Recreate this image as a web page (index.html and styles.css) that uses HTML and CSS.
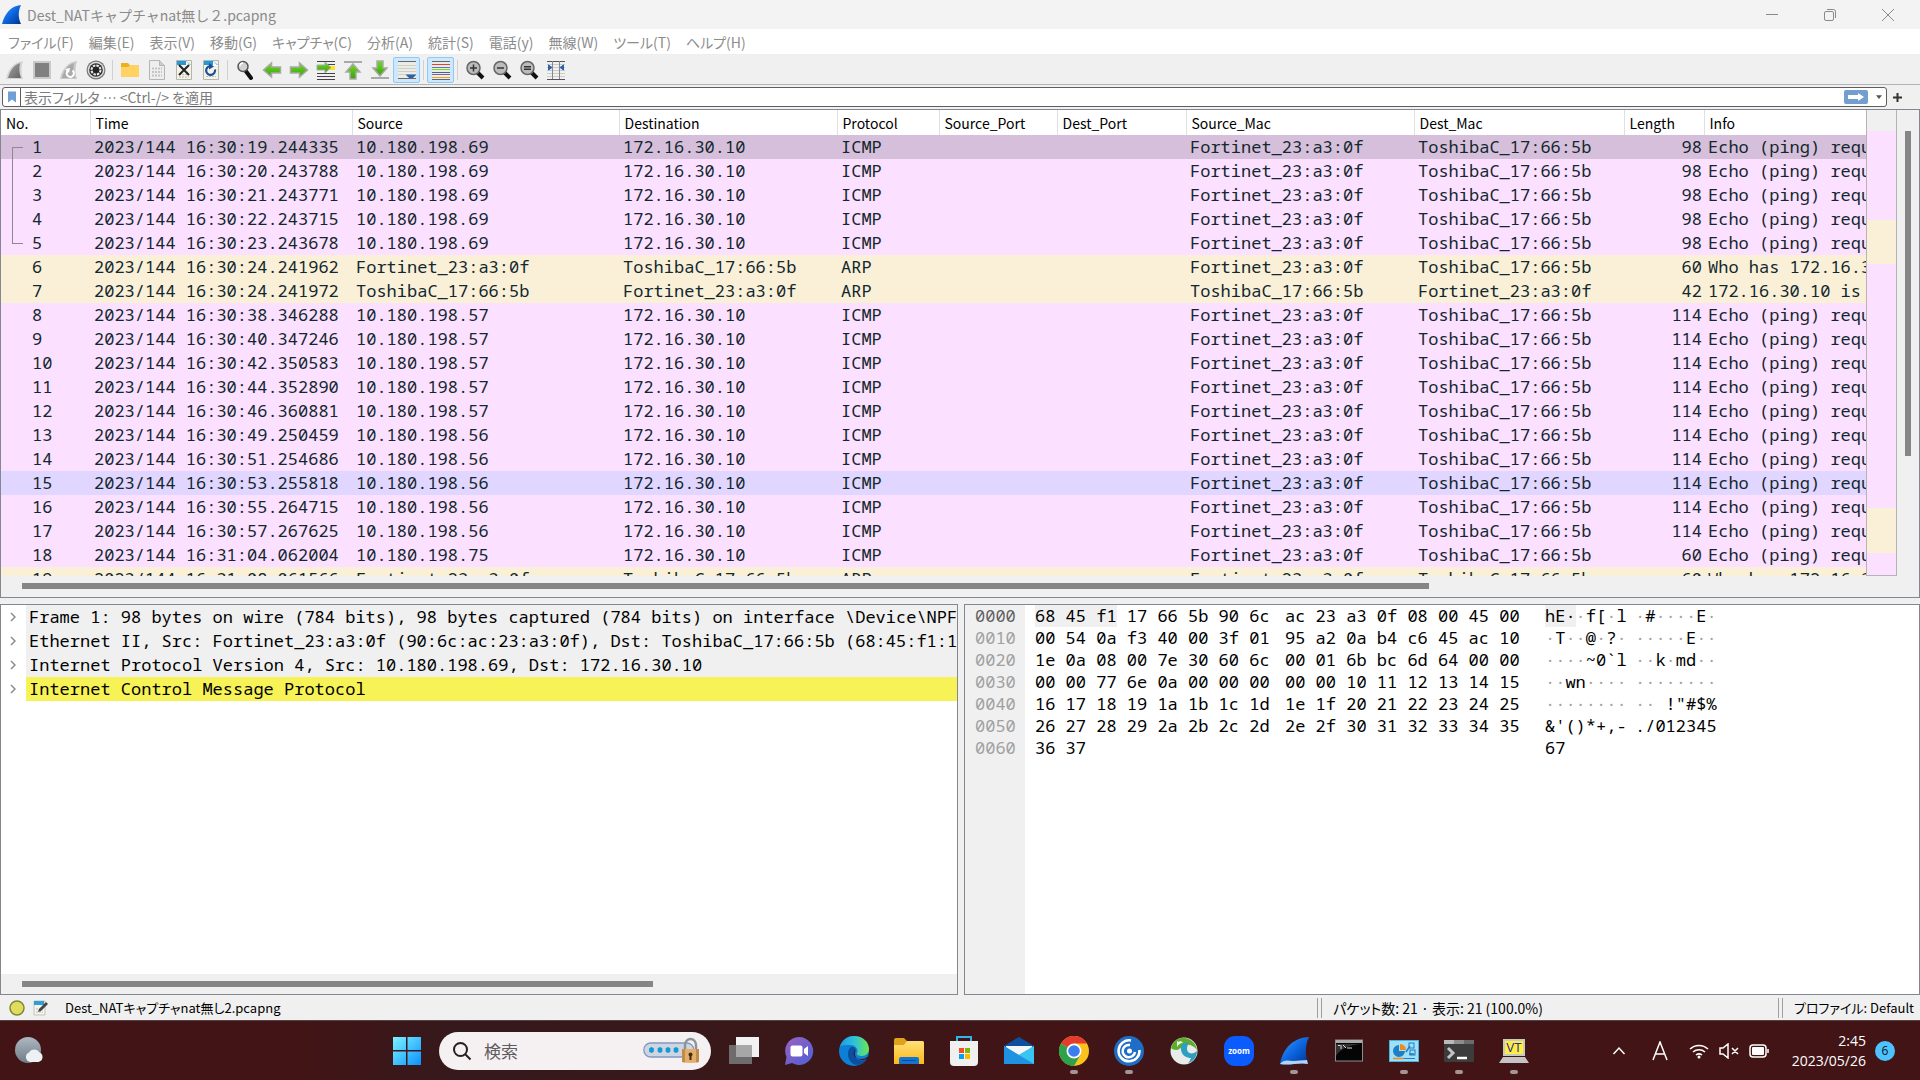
FILE: index.html
```html
<!DOCTYPE html>
<html lang="ja">
<head>
<meta charset="utf-8">
<title>Dest_NATキャプチャnat無し２.pcapng</title>
<link rel="stylesheet" href="styles.css">
</head>
<body>
<svg class="defs" aria-hidden="true">
  <defs>
    <linearGradient id="finBlue" x1="0" y1="0" x2="1" y2="1"><stop offset="0" stop-color="#3f9bff"/><stop offset=".5" stop-color="#0b66e0"/><stop offset="1" stop-color="#03318c"/></linearGradient>
    <linearGradient id="finGray" x1="0" y1="0" x2="1" y2="1"><stop offset="0" stop-color="#a5a5a5"/><stop offset="1" stop-color="#646464"/></linearGradient>
    <linearGradient id="green" x1="0" y1="0" x2="0" y2="1"><stop offset="0" stop-color="#6fdb25"/><stop offset="1" stop-color="#3c9f0a"/></linearGradient>
    <linearGradient id="folder" x1="0" y1="0" x2="0" y2="1"><stop offset="0" stop-color="#ffe07a"/><stop offset="1" stop-color="#fbb915"/></linearGradient>
    <linearGradient id="win" x1="0" y1="0" x2="1" y2="1"><stop offset="0" stop-color="#7df3ff"/><stop offset="1" stop-color="#0a92ff"/></linearGradient>
    <linearGradient id="edgeTop" x1="0" y1="0" x2="1" y2="0"><stop offset="0" stop-color="#1b9de2"/><stop offset=".5" stop-color="#2fc2d8"/><stop offset="1" stop-color="#6be64f"/></linearGradient>
    <linearGradient id="chat" x1="0" y1="0" x2="1" y2="1"><stop offset="0" stop-color="#9b62c0"/><stop offset="1" stop-color="#4a5fd8"/></linearGradient>
    <linearGradient id="weather" x1="0" y1="0" x2="0" y2="1"><stop offset="0" stop-color="#adb8c1"/><stop offset="1" stop-color="#707c86"/></linearGradient>
  </defs>
</svg>

<header class="titlebar">
  <svg class="app-icon" viewBox="0 0 20 20"><path d="M0 19C3 8 9 1 19 0c-3 6-3 13 0 19z" fill="url(#finBlue)"/></svg>
  <h1>Dest_NATキャプチャnat無し２.pcapng</h1>
  <div class="window-buttons">
    <button type="button" aria-label="最小化"><svg viewBox="0 0 14 14"><path d="M1 6.500h12"/></svg></button>
    <button type="button" aria-label="元に戻す"><svg viewBox="0 0 14 14"><rect x="1.500" y="3.500" width="9" height="9" rx="1.500"/><path d="M4 1.500h6.500a2 2 0 0 1 2 2V10"/></svg></button>
    <button type="button" aria-label="閉じる"><svg viewBox="0 0 14 14"><path d="M1 1l12 12M13 1L1 13"/></svg></button>
  </div>
</header>

<nav class="menubar">
  <button type="button">ファイル(F)</button>
  <button type="button">編集(E)</button>
  <button type="button">表示(V)</button>
  <button type="button">移動(G)</button>
  <button type="button">キャプチャ(C)</button>
  <button type="button">分析(A)</button>
  <button type="button">統計(S)</button>
  <button type="button">電話(y)</button>
  <button type="button">無線(W)</button>
  <button type="button">ツール(T)</button>
  <button type="button">ヘルプ(H)</button>
</nav>

<div class="toolbar" role="toolbar">
  <button type="button" aria-label="キャプチャ開始"><svg viewBox="0 0 20 20"><path d="M1 19C3 9 9 2 18 1c-2 6-2 12 0 18z" fill="#d4d4d4"/><path d="M3 18C5 10 9 5 15 3c-1 5-1 10 1 15z" fill="url(#finGray)"/></svg></button>
  <button type="button" aria-label="停止"><svg viewBox="0 0 20 20"><path d="M1 1h18v18H1z" fill="#c9c9c9"/><path d="M3 3h14v14H3z" fill="#808080"/></svg></button>
  <button type="button" aria-label="再開"><svg viewBox="0 0 20 20"><path d="M1 19C3 9 9 2 18 1c-2 6-2 12 0 18z" fill="#c9c9c9"/><path d="M3 18C5 10 9 5 15 3c-1 5-1 10 1 15z" fill="#a9a9a9"/><path d="M13.500 10.500a3.600 3.600 0 1 1-5 .5" fill="none" stroke="#fff" stroke-width="2"/><path d="M6 9l5-1-1 5z" fill="#fff"/></svg></button>
  <button type="button" aria-label="オプション"><svg viewBox="0 0 20 20"><circle cx="10" cy="10" r="9.500" fill="#777"/><circle cx="10" cy="10" r="8.300" fill="#ddd"/><circle cx="10" cy="10" r="6.800" fill="#2a2a2a"/><circle cx="10" cy="10" r="4.500" fill="none" stroke="#eee" stroke-width="2" stroke-dasharray="2.500 1"/><circle cx="10" cy="10" r="2.500" fill="#222"/></svg></button>
  <span class="sep"></span>
  <button type="button" aria-label="開く"><svg viewBox="0 0 20 20"><path d="M1 3h7l2 2.500h9V17H1z" fill="#efb01f"/><path d="M1 7h7l2-1.500h9V17H1z" fill="#ffd261"/></svg></button>
  <button type="button" aria-label="保存"><svg viewBox="0 0 20 20"><path d="M2.500.5h10l5 5v14h-15z" fill="#eee" stroke="#b4b4b4"/><path d="M12.500.5v5h5" fill="#ccc" stroke="#b4b4b4"/><path d="M5 8.500h10M5 12h10M5 15.500h10" stroke="#c3c3c3" stroke-width="2" stroke-dasharray="2 1"/></svg></button>
  <button type="button" aria-label="閉じる"><svg viewBox="0 0 20 20"><path d="M2.500.5h15v19h-15z" fill="#f3f3e8" stroke="#b5b5aa"/><path d="M3 1h9l5 4H3z" fill="#2499d8"/><path d="M12 1l5 5h-5z" fill="#fff"/><path d="M5 14.500h10M5 17h10" stroke="#bbb" stroke-dasharray="2 1"/><path d="M5 5l10 10M15 5L5 15" stroke="#222" stroke-width="2"/></svg></button>
  <button type="button" aria-label="再読み込み"><svg viewBox="0 0 20 20"><path d="M2.500.5h15v19h-15z" fill="#f3f3e8" stroke="#b5b5aa"/><path d="M3 1h9l5 4H3z" fill="#2499d8"/><path d="M12 1l5 5h-5z" fill="#fff"/><path d="M5 16.500h10" stroke="#bbb" stroke-dasharray="2 1"/><path d="M14 9.500A4.500 4.500 0 1 1 9 6" fill="none" stroke="#1b4f95" stroke-width="2.200"/><path d="M8 3l5 3.500-5 3z" fill="#1b4f95"/></svg></button>
  <span class="sep"></span>
  <button type="button" aria-label="検索"><svg viewBox="0 0 20 20"><path d="M10 10l6 8" stroke="#111" stroke-width="4" stroke-linecap="round"/><circle cx="8" cy="6.500" r="5" fill="#d0d3d5" stroke="#555" stroke-width="1.500"/><path d="M5 6c0-2 1-3 3-3" stroke="#fff" fill="none" stroke-width="1.500"/></svg></button>
  <button type="button" aria-label="戻る"><svg viewBox="0 0 20 20"><path d="M1.500 10l8-7v4h9v6h-9v4z" fill="url(#green)" stroke="#a9a9a9" stroke-width="1.500"/></svg></button>
  <button type="button" aria-label="進む"><svg viewBox="0 0 20 20"><path d="M18.500 10l-8-7v4h-9v6h9v4z" fill="url(#green)" stroke="#a9a9a9" stroke-width="1.500"/></svg></button>
  <button type="button" aria-label="指定パケットへ"><svg viewBox="0 0 20 20"><path d="M1 1.500h18M10 4.500h9M1 13.500h18M1 16.500h18M1 19.500h18" stroke="#444"/><path d="M13 6h6v4h-6z" fill="#fbe22b"/><path d="M15 7.500L9 2v3H1v5h8v3z" fill="url(#green)" stroke="#a9a9a9"/></svg></button>
  <button type="button" aria-label="最初へ"><svg viewBox="0 0 20 20"><path d="M1 1h18v2H1z" fill="#a9a9a9"/><path d="M10 4l7 8h-4v7H7v-7H3z" fill="url(#green)" stroke="#a9a9a9" stroke-width="1.500"/></svg></button>
  <button type="button" aria-label="最後へ"><svg viewBox="0 0 20 20"><path d="M1 17h18v2H1z" fill="#a9a9a9"/><path d="M10 16l7-8h-4V1H7v7H3z" fill="url(#green)" stroke="#a9a9a9" stroke-width="1.500"/></svg></button>
  <button type="button" class="pressed" aria-label="自動スクロール"><svg viewBox="0 0 20 20"><path d="M1 2h18v16H1z" fill="#ecece6"/><path d="M1 1.500h18M1 18.500h18" stroke="#666"/><path d="M1 5.500h18M1 8.500h18M1 11.500h18M1 14.500h18" stroke="#cfcfc8"/><path d="M9 14.500h10c0 1.500-2 2-3 3.500h-4c-1-1.500-3-2-3-3.500z" fill="#2c62ab"/></svg></button>
  <span class="sep"></span>
  <button type="button" class="pressed" aria-label="色分け"><svg viewBox="0 0 20 20"><path d="M1 1h18v18H1z" fill="#ecece6"/><path d="M1 1.500h18M1 19.500h18" stroke="#666"/><path d="M1 4.500h18" stroke="#ef3b34"/><path d="M1 7.500h18" stroke="#4a7cc0"/><path d="M1 9.500h18" stroke="#6fd625"/><path d="M1 12.500h18" stroke="#3966a8"/><path d="M1 14.500h18" stroke="#8a5f90"/><path d="M1 17.500h18" stroke="#d6a72b"/></svg></button>
  <span class="sep"></span>
  <button type="button" aria-label="拡大"><svg viewBox="0 0 20 20"><path d="M12 12l6 6" stroke="#111" stroke-width="4"/><circle cx="8.500" cy="8" r="6.500" fill="#bcbcbc" stroke="#666" stroke-width="1.500"/><path d="M5 8h7M8.500 4.500v7" stroke="#333" stroke-width="1.500"/></svg></button>
  <button type="button" aria-label="縮小"><svg viewBox="0 0 20 20"><path d="M12 12l6 6" stroke="#111" stroke-width="4"/><circle cx="8.500" cy="8" r="6.500" fill="#bcbcbc" stroke="#666" stroke-width="1.500"/><path d="M5 8h7" stroke="#333" stroke-width="1.500"/></svg></button>
  <button type="button" aria-label="標準サイズ"><svg viewBox="0 0 20 20"><path d="M12 12l6 6" stroke="#111" stroke-width="4"/><circle cx="8.500" cy="8" r="6.500" fill="#bcbcbc" stroke="#666" stroke-width="1.500"/><path d="M5 6.800h7M5 9.300h7" stroke="#333" stroke-width="1.500"/></svg></button>
  <button type="button" aria-label="列幅の調整"><svg viewBox="0 0 20 20"><path d="M1 1.500h18M1 19.500h18" stroke="#555"/><path d="M1 4.500h18M1 7.500h18M1 10.500h18M1 13.500h18M1 16.500h18" stroke="#ccc"/><path d="M6.500 1v18M13.500 1v18" stroke="#888"/><path d="M2.500 5l3.500 2.500L2.500 10zM17.500 5L14 7.500l3.500 2.500z" fill="#2c62ab" stroke="#2c62ab"/></svg></button>
</div>

<form class="filterbar">
  <div class="filter-box">
    <button type="button" class="bookmark" aria-label="ブックマーク"><svg viewBox="0 0 10 14"><path d="M0 0h10v14l-5-4-5 4z" fill="#6f9fd4"/></svg></button>
    <input type="text" aria-label="表示フィルタ" placeholder="表示フィルタ … &lt;Ctrl-/&gt; を適用">
    <button type="button" class="apply" aria-label="適用"><svg viewBox="0 0 24 14"><rect width="24" height="14" rx="2" fill="#729fcf"/><path d="M4 5h10V3l6 4-6 4V9H4z" fill="#fff"/></svg></button>
    <button type="button" class="history" aria-label="履歴"><svg viewBox="0 0 8 5"><path d="M0 0h8L4 5z" fill="#555"/></svg></button>
  </div>
  <button type="button" class="add" aria-label="追加"><svg viewBox="0 0 9 9"><path d="M4.500 0v9M0 4.500h9" stroke="#333" stroke-width="2"/></svg></button>
</form>

<main class="panes">
  <section class="packet-list">
    <div class="packet-scroll">
      <table>
        <colgroup><col class="c-no"><col class="c-time"><col class="c-source"><col class="c-dest"><col class="c-proto"><col class="c-sport"><col class="c-dport"><col class="c-smac"><col class="c-dmac"><col class="c-len"><col></colgroup>
        <thead><tr><th>No.</th><th>Time</th><th>Source</th><th>Destination</th><th>Protocol</th><th>Source_Port</th><th>Dest_Port</th><th>Source_Mac</th><th>Dest_Mac</th><th>Length</th><th>Info</th></tr></thead>
        <tbody>
        <tr class="selected conv first"><td>1</td><td>2023/144 16:30:19.244335</td><td>10.180.198.69</td><td>172.16.30.10</td><td>ICMP</td><td></td><td></td><td>Fortinet_23:a3:0f</td><td>ToshibaC_17:66:5b</td><td>98</td><td>Echo (ping) requ</td></tr>
        <tr class="conv"><td>2</td><td>2023/144 16:30:20.243788</td><td>10.180.198.69</td><td>172.16.30.10</td><td>ICMP</td><td></td><td></td><td>Fortinet_23:a3:0f</td><td>ToshibaC_17:66:5b</td><td>98</td><td>Echo (ping) requ</td></tr>
        <tr class="conv"><td>3</td><td>2023/144 16:30:21.243771</td><td>10.180.198.69</td><td>172.16.30.10</td><td>ICMP</td><td></td><td></td><td>Fortinet_23:a3:0f</td><td>ToshibaC_17:66:5b</td><td>98</td><td>Echo (ping) requ</td></tr>
        <tr class="conv"><td>4</td><td>2023/144 16:30:22.243715</td><td>10.180.198.69</td><td>172.16.30.10</td><td>ICMP</td><td></td><td></td><td>Fortinet_23:a3:0f</td><td>ToshibaC_17:66:5b</td><td>98</td><td>Echo (ping) requ</td></tr>
        <tr class="conv last"><td>5</td><td>2023/144 16:30:23.243678</td><td>10.180.198.69</td><td>172.16.30.10</td><td>ICMP</td><td></td><td></td><td>Fortinet_23:a3:0f</td><td>ToshibaC_17:66:5b</td><td>98</td><td>Echo (ping) requ</td></tr>
        <tr class="arp"><td>6</td><td>2023/144 16:30:24.241962</td><td>Fortinet_23:a3:0f</td><td>ToshibaC_17:66:5b</td><td>ARP</td><td></td><td></td><td>Fortinet_23:a3:0f</td><td>ToshibaC_17:66:5b</td><td>60</td><td>Who has 172.16.3</td></tr>
        <tr class="arp"><td>7</td><td>2023/144 16:30:24.241972</td><td>ToshibaC_17:66:5b</td><td>Fortinet_23:a3:0f</td><td>ARP</td><td></td><td></td><td>ToshibaC_17:66:5b</td><td>Fortinet_23:a3:0f</td><td>42</td><td>172.16.30.10 is</td></tr>
        <tr><td>8</td><td>2023/144 16:30:38.346288</td><td>10.180.198.57</td><td>172.16.30.10</td><td>ICMP</td><td></td><td></td><td>Fortinet_23:a3:0f</td><td>ToshibaC_17:66:5b</td><td>114</td><td>Echo (ping) requ</td></tr>
        <tr><td>9</td><td>2023/144 16:30:40.347246</td><td>10.180.198.57</td><td>172.16.30.10</td><td>ICMP</td><td></td><td></td><td>Fortinet_23:a3:0f</td><td>ToshibaC_17:66:5b</td><td>114</td><td>Echo (ping) requ</td></tr>
        <tr><td>10</td><td>2023/144 16:30:42.350583</td><td>10.180.198.57</td><td>172.16.30.10</td><td>ICMP</td><td></td><td></td><td>Fortinet_23:a3:0f</td><td>ToshibaC_17:66:5b</td><td>114</td><td>Echo (ping) requ</td></tr>
        <tr><td>11</td><td>2023/144 16:30:44.352890</td><td>10.180.198.57</td><td>172.16.30.10</td><td>ICMP</td><td></td><td></td><td>Fortinet_23:a3:0f</td><td>ToshibaC_17:66:5b</td><td>114</td><td>Echo (ping) requ</td></tr>
        <tr><td>12</td><td>2023/144 16:30:46.360881</td><td>10.180.198.57</td><td>172.16.30.10</td><td>ICMP</td><td></td><td></td><td>Fortinet_23:a3:0f</td><td>ToshibaC_17:66:5b</td><td>114</td><td>Echo (ping) requ</td></tr>
        <tr><td>13</td><td>2023/144 16:30:49.250459</td><td>10.180.198.56</td><td>172.16.30.10</td><td>ICMP</td><td></td><td></td><td>Fortinet_23:a3:0f</td><td>ToshibaC_17:66:5b</td><td>114</td><td>Echo (ping) requ</td></tr>
        <tr><td>14</td><td>2023/144 16:30:51.254686</td><td>10.180.198.56</td><td>172.16.30.10</td><td>ICMP</td><td></td><td></td><td>Fortinet_23:a3:0f</td><td>ToshibaC_17:66:5b</td><td>114</td><td>Echo (ping) requ</td></tr>
        <tr class="hover"><td>15</td><td>2023/144 16:30:53.255818</td><td>10.180.198.56</td><td>172.16.30.10</td><td>ICMP</td><td></td><td></td><td>Fortinet_23:a3:0f</td><td>ToshibaC_17:66:5b</td><td>114</td><td>Echo (ping) requ</td></tr>
        <tr><td>16</td><td>2023/144 16:30:55.264715</td><td>10.180.198.56</td><td>172.16.30.10</td><td>ICMP</td><td></td><td></td><td>Fortinet_23:a3:0f</td><td>ToshibaC_17:66:5b</td><td>114</td><td>Echo (ping) requ</td></tr>
        <tr><td>17</td><td>2023/144 16:30:57.267625</td><td>10.180.198.56</td><td>172.16.30.10</td><td>ICMP</td><td></td><td></td><td>Fortinet_23:a3:0f</td><td>ToshibaC_17:66:5b</td><td>114</td><td>Echo (ping) requ</td></tr>
        <tr><td>18</td><td>2023/144 16:31:04.062004</td><td>10.180.198.75</td><td>172.16.30.10</td><td>ICMP</td><td></td><td></td><td>Fortinet_23:a3:0f</td><td>ToshibaC_17:66:5b</td><td>60</td><td>Echo (ping) requ</td></tr>
        <tr class="arp"><td>19</td><td>2023/144 16:31:08.061566</td><td>Fortinet_23:a3:0f</td><td>ToshibaC_17:66:5b</td><td>ARP</td><td></td><td></td><td>Fortinet_23:a3:0f</td><td>ToshibaC_17:66:5b</td><td>60</td><td>Who has 172.16.3</td></tr>
        </tbody>
      </table>
    </div>
    <div class="minimap"><i class="m4"></i><i class="m2 cream"></i><i class="m11"></i><i class="m2 cream"></i><i class="m1"></i></div>
    <div class="vscroll"><span class="thumb"></span></div>
    <div class="hscroll"><span class="thumb"></span></div>
  </section>

  <div class="lower">
    <section class="details">
      <ul class="tree">
        <li><svg viewBox="0 0 6 10"><path d="M1 1l4 4-4 4"/></svg><span>Frame 1: 98 bytes on wire (784 bits), 98 bytes captured (784 bits) on interface \Device\NPF_{</span></li>
        <li><svg viewBox="0 0 6 10"><path d="M1 1l4 4-4 4"/></svg><span>Ethernet II, Src: Fortinet_23:a3:0f (90:6c:ac:23:a3:0f), Dst: ToshibaC_17:66:5b (68:45:f1:17:</span></li>
        <li><svg viewBox="0 0 6 10"><path d="M1 1l4 4-4 4"/></svg><span>Internet Protocol Version 4, Src: 10.180.198.69, Dst: 172.16.30.10</span></li>
        <li class="warn"><svg viewBox="0 0 6 10"><path d="M1 1l4 4-4 4"/></svg><span>Internet Control Message Protocol</span></li>
      </ul>
      <div class="hscroll"><span class="thumb"></span></div>
    </section>
    <section class="bytes">
      <table class="hex">
        <tr class="current"><th>0000</th><td><mark>68 45 f1</mark> 17 66 5b 90 6c</td><td>ac 23 a3 0f 08 00 45 00</td><td><mark>hE·</mark><i>·</i>f[<i>·</i>l</td><td><i>·</i>#<i>····</i>E<i>·</i></td></tr>
        <tr><th>0010</th><td>00 54 0a f3 40 00 3f 01</td><td>95 a2 0a b4 c6 45 ac 10</td><td><i>·</i>T<i>··</i>@<i>·</i>?<i>·</i></td><td><i>·····</i>E<i>··</i></td></tr>
        <tr><th>0020</th><td>1e 0a 08 00 7e 30 60 6c</td><td>00 01 6b bc 6d 64 00 00</td><td><i>····</i>~0`l</td><td><i>··</i>k<i>·</i>md<i>··</i></td></tr>
        <tr><th>0030</th><td>00 00 77 6e 0a 00 00 00</td><td>00 00 10 11 12 13 14 15</td><td><i>··</i>wn<i>····</i></td><td><i>········</i></td></tr>
        <tr><th>0040</th><td>16 17 18 19 1a 1b 1c 1d</td><td>1e 1f 20 21 22 23 24 25</td><td><i>········</i></td><td><i>··</i> !"#$%</td></tr>
        <tr><th>0050</th><td>26 27 28 29 2a 2b 2c 2d</td><td>2e 2f 30 31 32 33 34 35</td><td>&amp;'()*+,-</td><td>./012345</td></tr>
        <tr><th>0060</th><td>36 37</td><td></td><td>67</td><td></td></tr>
      </table>
    </section>
  </div>
</main>

<div class="statusbar">
  <div class="status-file">
    <svg class="expert" viewBox="0 0 16 16"><circle cx="8" cy="8" r="7" fill="#dede5c" stroke="#85853a" stroke-width="1.500"/></svg>
    <svg class="comment" viewBox="0 0 16 16"><path d="M1 1h11v14H1z" fill="#f4f4ec" stroke="#c4c4bb"/><path d="M1 1h10v4H1z" fill="#2c9fda"/><path d="M3 9h7M3 12h7" stroke="#bbb" stroke-dasharray="2 1"/><path d="M13 2l2 2-7 7-3 1 1-3z" fill="#444"/></svg>
    <span>Dest_NATキャプチャnat無し2.pcapng</span>
  </div>
  <div class="status-count">パケット数: 21 · 表示: 21 (100.0%)</div>
  <div class="status-profile">プロファイル: Default</div>
</div>

<footer class="taskbar">
  <button type="button" class="weather" aria-label="天気"><svg viewBox="0 0 30 30"><circle cx="14" cy="14" r="13" fill="url(#weather)"/><path d="M16 26a5 5 0 0 1-1-9.500 6 6 0 0 1 10.500 0A5 5 0 0 1 24.500 26z" fill="#eef1f4"/></svg></button>
  <div class="apps">
    <button type="button" aria-label="スタート"><svg viewBox="0 0 30 30"><path d="M1 1h13v13H1zM15.500 1h13.500v13H15.500zM1 15.500h13V29H1zM15.500 15.500h13.500V29H15.500z" fill="url(#win)"/></svg></button>
    <div class="search">
      <svg class="lens" viewBox="0 0 20 20"><circle cx="8.500" cy="8.500" r="6.500"/><path d="M13 13l5.500 5.500"/></svg>
      <input type="text" aria-label="検索" placeholder="検索">
      <svg class="password" viewBox="0 0 58 28"><rect x=".8" y="6" width="50" height="14" rx="7" fill="#cfd6e2" stroke="#8398c0" stroke-width="1.300"/><path d="M6 13h5M8.500 10v6M6.500 11l4 4M10.500 11l-4 4M14.500 13h5M17 10v6M15 11l4 4M19 11l-4 4M22.500 13h5M25 10v6M23 11l4 4M27 11l-4 4M30.500 13h5M33 10v6M31 11l4 4M35 11l-4 4" stroke="#129ad2" stroke-width="1.500"/><path d="M42 14V8a5.500 6 0 0 1 11 0v6" fill="none" stroke="#8d9498" stroke-width="2.500"/><path d="M39 12h17v13q-8 2-17 0z" fill="#e0b06c"/><path d="M39 12h3v13.500l-3-.5zM53 12h3v13l-3 .5z" fill="#c28c48"/><circle cx="47.500" cy="17.500" r="2" fill="#432a12"/><path d="M46.500 18h2v5h-2z" fill="#432a12"/></svg>
    </div>
    <button type="button" aria-label="タスクビュー"><svg viewBox="0 0 30 30"><path d="M0 9h23v19H0z" fill="#6e6c6c"/><path d="M7 1h23v20H7z" fill="#f1f1f1"/><path d="M7 9h16v12H7z" fill="#a8a7a7"/></svg></button>
    <button type="button" aria-label="チャット"><svg viewBox="0 0 30 30"><path d="M15 1a14 14 0 1 1-7 26L1 29l1.500-8A14 14 0 0 1 15 1z" fill="url(#chat)"/><rect x="6.500" y="9.500" width="12" height="11" rx="2" fill="#fff"/><path d="M20 13l4-3v10l-4-3z" fill="#fff"/></svg></button>
    <button type="button" aria-label="Edge"><svg viewBox="0 0 30 30"><circle cx="15" cy="15" r="15" fill="#0d7fd6"/><path d="M1 11C3 4 8 0 15 0c9 0 15 6 15 13 0 4-3 7-7 7-3 0-6-1-5-3 2-3-1-8-7-8-5 0-8 0-10 2z" fill="url(#edgeTop)"/><path d="M11 12c-3 3-3 11 2 15 5 4 12 1 15-4-6 3-12 1-12-5 0-2 1-3 1-4-1-4-5-4-6-2z" fill="#0c4f9f"/><path d="M16 14c-3 3-1 9 6 9 3 0 5-1 6-2 1-1 2 1 2 2v3l-2 1c1-2 1-4 0-4-7 3-14-1-12-9z" fill="#431416"/></svg></button>
    <button type="button" aria-label="エクスプローラー"><svg viewBox="0 0 30 30"><path d="M0 4q0-2 2-2h8l3 3h15q2 0 2 2v6H0z" fill="#dea31a"/><path d="M0 9h10l3-4h15q2 0 2 2v21H0z" fill="url(#folder)"/><path d="M5 28v-5q0-2 2-2h16q2 0 2 2v5z" fill="#1474d1"/><path d="M8 24.500h14" stroke="#0a4e96"/></svg></button>
    <button type="button" aria-label="Store"><svg viewBox="0 0 30 30"><path d="M8 6V1h14v5" fill="none" stroke="#31b5ec" stroke-width="2"/><path d="M1 5h28v21q0 4-4 4H5q-4 0-4-4z" fill="#f0f0f0"/><path d="M10 12h5v5h-5z" fill="#f25022"/><path d="M16 12h5v5h-5z" fill="#7fba00"/><path d="M10 18h5v5h-5z" fill="#00a4ef"/><path d="M16 18h5v5h-5z" fill="#ffb900"/></svg></button>
    <button type="button" aria-label="メール"><svg viewBox="0 0 30 30"><path d="M0 10L15 1l15 9v6H0z" fill="#0c4f9f"/><path d="M2 10h26v10H2z" fill="#f5f5f5"/><path d="M0 10l15 9 15-9v18H0z" fill="#2cb0ee"/><path d="M0 28L30 10v18z" fill="#39c5f3"/><path d="M0 10l30 18H0z" fill="#1f93e2"/></svg></button>
    <button type="button" class="running" aria-label="Chrome"><svg viewBox="0 0 30 30"><circle cx="15" cy="15" r="15" fill="#fcc31e"/><path d="M15 15L2 7.500A15 15 0 0 1 28 7.500H15z" fill="#e33b2e"/><path d="M2 7.500A15 15 0 0 0 15 30l6.500-11.200L15 15z" fill="#2da14b"/><circle cx="15" cy="15" r="7.500" fill="#fff"/><circle cx="15" cy="15" r="5.800" fill="#3b7ded"/></svg></button>
    <button type="button" class="running" aria-label="Citrix"><svg viewBox="0 0 30 30"><circle cx="15" cy="15" r="15" fill="#1f6dc6"/><g fill="none" stroke="#fff" stroke-width="2.500"><path d="M17 4.500A10.500 10.500 0 1 0 25.500 14"/><path d="M16 9a6.200 6.200 0 1 0 5 7"/></g><circle cx="15.500" cy="15" r="2.500" fill="#fff"/></svg></button>
    <button type="button" aria-label="AnyConnect"><svg viewBox="0 0 30 30"><circle cx="15" cy="15" r="13.500" fill="#e8ebe8"/><path d="M2 12C4 5 10 1 16 2c7 1 11 6 12 12-3-4-7-6-11-5-4 0-5 4-9 5-3 0-5-1-6-2z" fill="#5cae2b"/><path d="M20 7c-5-2-9 2-8 7 1 6 6 8 10 8-1 2-1 3-3 5 5-1 9-6 9-12-3 3-7 3-9 1-2-3-1-6 1-9z" fill="#2e9fc0"/><path d="M8 5c1 1 2 1 4 0l2 2c-3 0-5 2-6 4z" fill="#f4f6f4"/></svg></button>
    <button type="button" aria-label="Zoom"><svg viewBox="0 0 30 30"><rect width="30" height="30" rx="11" fill="#0b5cff"/><text x="15" y="18" text-anchor="middle" class="zoom-word">zoom</text></svg></button>
    <button type="button" class="running" aria-label="Wireshark"><svg viewBox="0 0 30 30"><path d="M1 28C4 13 13 2 30 1c-4 8-4 18-1 27-9-2-18 2-28 0z" fill="url(#finBlue)"/><path d="M1 28c4-5 8-3 13-3s9-1 14-1l1 4c-9-2-18 2-28 0z" fill="#b4d2f3"/></svg></button>
    <button type="button" aria-label="コマンドプロンプト"><svg viewBox="0 0 30 30"><rect x="1.500" y="4" width="27" height="21" fill="#050505" stroke="#8d8d8d"/><path d="M2 4h26v3H2z" fill="#aaa"/><path d="M2 8h24Q8 10 2 20z" fill="#333"/><path d="M4 9.500h2M7 9v4M9 9l3 3M13 12h5" stroke="#ddd"/></svg></button>
    <button type="button" class="running" aria-label="コントロールパネル"><svg viewBox="0 0 30 30"><rect x=".5" y="4.500" width="29" height="21" fill="#9fdff7" stroke="#42b4e6"/><path d="M10 9a6 6 0 1 0 6 6h-6z" fill="#1e7fc4"/><path d="M11 8a6 6 0 0 1 6 6h-6z" fill="#f18a1b"/><path d="M17 16l4-6M20 18h5" stroke="#1e7fc4" stroke-width="1.500"/><rect x="20" y="7" width="5" height="5" fill="none" stroke="#1e7fc4"/><rect x="21" y="14" width="5" height="5" fill="none" stroke="#1e7fc4"/><path d="M4 22.500h11" stroke="#f18a1b" stroke-width="1.500"/><path d="M15 22.500h11" stroke="#1e7fc4"/></svg></button>
    <button type="button" class="running" aria-label="ターミナル"><svg viewBox="0 0 30 30"><rect y="4" width="30" height="22" rx="1" fill="#3c3c3c"/><path d="M0 4h10v4H0z" fill="#b9b9b9"/><path d="M10 4h10v4H10z" fill="#8d8d8d"/><path d="M20 4h10v4H20z" fill="#6b6b6b"/><path d="M4 12l5 5-5 5" fill="none" stroke="#c4c4c4" stroke-width="3"/><path d="M13 22h10" stroke="#fff" stroke-width="2.500"/></svg></button>
    <button type="button" class="running" aria-label="Tera Term"><svg viewBox="0 0 30 30"><path d="M4 3h22v17H4z" fill="#c9c9c0"/><path d="M6 5h18v13H6z" fill="#ffee3d"/><path d="M4 21h22l4 6H0z" fill="#c4c4c4"/><text x="15" y="16" text-anchor="middle" class="vt-word">VT</text></svg></button>
  </div>
  <div class="tray">
    <button type="button" class="tray-up" aria-label="隠れているインジケーター"><svg viewBox="0 0 14 10"><path d="M1.500 8L7 2l5.500 6"/></svg></button>
    <button type="button" class="ime" aria-label="入力モード A"><svg viewBox="0 0 18 20"><path d="M2 19L9 1l7 18M4.500 13h9"/></svg></button>
    <button type="button" class="net" aria-label="ネットワーク"><svg viewBox="0 0 20 16"><path d="M1 6a13 13 0 0 1 18 0M4 9a9 9 0 0 1 12 0M7 12a5 5 0 0 1 6 0"/><circle cx="10" cy="14" r="1.500" fill="#fff" stroke="none"/></svg><svg viewBox="0 0 20 16"><path d="M1 5h3l5-4v14l-5-4H1zM13 5l6 6M19 5l-6 6"/></svg><svg viewBox="0 0 20 16"><rect x="1" y="2" width="16" height="12" rx="3"/><rect x="3" y="4" width="12" height="8" rx="1" fill="#fff" stroke="none"/><path d="M19 6v4"/></svg></button>
    <button type="button" class="clock"><span>2:45</span><span>2023/05/26</span></button>
    <span class="badge">6</span>
  </div>
</footer>
</body>
</html>
```
FILE: styles.css
```css
:root {
  --ui: "Noto Sans CJK JP", sans-serif;
  --mono: "Noto Sans Mono", "Liberation Mono", monospace;
  --chrome: #f0f0f0;
  --edge: #828790;
  --thumb: #868686;
}

* { box-sizing: border-box; }

body {
  margin: 0;
  min-height: 100vh;
  display: flex;
  flex-direction: column;
  background: var(--chrome);
  color: #000;
  font: 14px/20px var(--ui);
  font-feature-settings: "palt";
  overflow: hidden;
}

button {
  display: flex;
  align-items: center;
  justify-content: center;
  padding: 0;
  border: 0;
  background: none;
  color: inherit;
  font: inherit;
}

input {
  min-width: 0;
  border: 0;
  padding: 0;
  outline: 0;
  background: none;
  font: inherit;
}

.defs { position: absolute; width: 0; height: 0; }

.titlebar {
  display: flex;
  align-items: center;
  height: 29px;
  padding: 0 3px 0 2px;
  background: #f3f3f3;
}
.app-icon { width: 20px; height: 20px; }
.titlebar h1 {
  flex: 1;
  margin: 0 0 0 5px;
  color: #8a8a8a;
  font: 14px/20px var(--ui);
}
.window-buttons { display: flex; }
.window-buttons button { width: 58px; height: 29px; }
.window-buttons svg { width: 14px; height: 14px; fill: none; stroke: #8a8a8a; }

.menubar {
  display: flex;
  gap: 15px;
  height: 26px;
  padding-left: 8px;
  background: #fff;
  border-bottom: 1px solid #eee;
  color: #8c8c8c;
}

.toolbar {
  display: flex;
  align-items: center;
  height: 30px;
  padding-left: 1px;
  border-bottom: 1px solid #b4b4b4;
}
.toolbar button { width: 27px; height: 26px; }
.toolbar svg { width: 20px; height: 20px; }
.toolbar .pressed { background: #cce8ff; border: 1px solid #90c8f6; border-radius: 2px; }
.sep { width: 1px; height: 20px; margin: 0 3px; background: #d0d0d0; }

.filterbar {
  display: flex;
  align-items: center;
  height: 24px;
  padding: 0 18px 0 2px;
}
.filter-box {
  flex: 1;
  display: flex;
  align-items: center;
  height: 20px;
  background: #fff;
  border: 1px solid #5e5e5e;
  border-radius: 3px;
}
.bookmark { width: 18px; height: 18px; border-right: 1px solid #5e5e5e; }
.bookmark svg { width: 8px; height: 14px; }
.filter-box input { flex: 1; height: 18px; padding-left: 3px; color: #000; font-feature-settings: inherit; }
.filter-box input::placeholder { color: #7c7c7c; opacity: 1; }
.apply svg { width: 24px; height: 14px; }
.history { width: 18px; }
.history svg { width: 6px; height: 4px; margin-left: 4px; }
.add { margin-left: 6px; }
.add svg { width: 9px; height: 9px; }

.panes { flex: 1; display: flex; flex-direction: column; gap: 6px; min-height: 0; }

.packet-list {
  flex: 488 1 0;
  display: grid;
  grid-template: minmax(0, 1fr) 21px / minmax(0, 1fr) 31px 22px;
  min-height: 0;
  border: 1px solid var(--edge);
}
.packet-scroll { overflow: hidden; background: #fff; }
.packet-list table {
  width: 100%;
  table-layout: fixed;
  border-collapse: collapse;
}
.c-no { width: 89px; }
.c-time { width: 262px; }
.c-source { width: 267px; }
.c-dest { width: 218px; }
.c-proto { width: 102px; }
.c-sport { width: 118px; }
.c-dport { width: 129px; }
.c-smac { width: 228px; }
.c-dmac { width: 210px; }
.c-len { width: 80px; }

.packet-list th {
  height: 25px;
  padding: 0 5px;
  border-right: 1px solid #e0e0e0;
  font-weight: 400;
  text-align: left;
}
.packet-list th:last-child { border-right: 0; }
.packet-list td {
  height: 24px;
  padding: 0 0 0 4px;
  overflow: hidden;
  color: #12272e;
  font: 17px/24px var(--mono);
  white-space: nowrap;
}
.packet-list td:first-child { position: relative; padding-left: 31px; }
.packet-list td:nth-child(10) { padding: 0 2px 0 0; text-align: right; }
.packet-list tbody tr { background: #fce0ff; }
.packet-list tbody .selected { background: #d6bfda; }
.packet-list tbody .arp { background: #faf0d7; }
.packet-list tbody .hover { background: #e0d6ff; }

.conv td:first-child::before {
  content: "";
  position: absolute;
  left: 11px;
  top: 0;
  width: 10px;
  height: 24px;
  border-left: 1px solid #8f8795;
}
.first td:first-child::before { top: 12px; height: 12px; border-top: 1px solid #8f8795; }
.last td:first-child::before { height: 12px; border-bottom: 1px solid #8f8795; }

.minimap {
  display: flex;
  flex-direction: column;
  padding-top: 21px;
  border: solid #b4b4b4;
  border-width: 0 1px 1px;
}
.minimap i { background: #fce0ff; }
.minimap .cream { background: #faf0d7; }
.m1 { flex: 1; }
.m2 { flex: 2; }
.m4 { flex: 4; }
.m11 { flex: 11; }

.vscroll { display: flex; justify-content: center; padding: 21px 0 0; }
.vscroll .thumb { width: 6px; height: 73%; background: var(--thumb); }
.hscroll { display: flex; align-items: center; height: 20px; padding: 0 21px; background: var(--chrome); }
.hscroll .thumb { height: 6px; background: var(--thumb); }
.packet-list .hscroll { grid-column: 1 / -1; }
.packet-list .hscroll .thumb { width: 75%; }

.lower { flex: 392 1 0; display: grid; grid-template-columns: 958fr 956fr; gap: 6px; min-height: 0; }
.details, .bytes { min-width: 0; background: #fff; border: 1px solid var(--edge); overflow: hidden; }
.details { display: flex; flex-direction: column; }
.details .hscroll .thumb { width: 69%; }

.tree { flex: 1; margin: 0; padding: 0; list-style: none; font: 17px/24px var(--mono); }
.tree li { display: flex; align-items: center; height: 24px; padding-left: 9px; }
.tree svg { flex: none; width: 6px; height: 10px; margin-right: 10px; fill: none; stroke: #8c8c8c; stroke-width: 1.5; }
.tree span { flex: 1; min-width: 0; padding-left: 3px; overflow: hidden; white-space: nowrap; background: #f0f0f0; }
.tree .warn span { background: #f7f357; }

.bytes { background: linear-gradient(90deg, var(--chrome) 60px, #fff 60px); }
.hex { border-collapse: collapse; font: 17px/22px var(--mono); }
.hex th { width: 60px; padding: 0 0 0 10px; color: #a0a0a0; font-weight: 400; text-align: left; }
.hex .current th { color: #606060; }
.hex td { height: 22px; padding: 0; white-space: pre; }
.hex td:nth-child(2) { min-width: 260px; padding-left: 10px; }
.hex td:nth-child(3) { min-width: 260px; }
.hex td:nth-child(4) { min-width: 90px; }
.hex i { color: #a0a0a0; font-style: normal; }
.hex mark { color: inherit; background: #f0f0f0; }

.statusbar { display: flex; align-items: center; height: 25px; line-height: 25px; }
.status-file { flex: 1; display: flex; align-items: center; padding-left: 9px; font-size: 13px; }
.expert, .comment { width: 16px; height: 16px; margin-right: 8px; }
.status-file span { margin-left: 8px; }
.status-count, .status-profile {
  height: 20px;
  padding-left: 15px;
  border-left: 1px solid #a0a0a0;
  background: linear-gradient(#a0a0a0, #a0a0a0) 3px 0 / 1px 100% no-repeat;
  line-height: 20px;
}
.status-count { flex: 0 0 24%; }
.status-profile { flex: none; padding-right: 6px; font-size: 13px; }

.taskbar {
  display: grid;
  grid-template-columns: 1fr auto 1fr;
  align-items: center;
  height: 60px;
  border-top: 1px solid #554243;
  background: linear-gradient(90deg, #431416 0%, #431416 15%, #35191c 24%, #3a1719 42%, #431416 55%, #3d1618 62%, #431416 75%);
  color: #fff;
}
.weather { justify-self: start; margin-left: 14px; }
.weather svg, .apps button svg { width: 30px; height: 30px; }
.apps { display: flex; align-items: center; }
.apps button { position: relative; width: 55px; height: 58px; }
.running::after {
  content: "";
  position: absolute;
  left: 24px;
  bottom: 6px;
  width: 8px;
  height: 4px;
  border-radius: 2px;
  background: #a59496;
}
.search {
  display: flex;
  align-items: center;
  width: 272px;
  height: 38px;
  margin: 0 5px;
  padding: 0 10px 0 13px;
  border-radius: 19px;
  background: #f5f1f3;
}
.lens { width: 20px; height: 20px; fill: none; stroke: #222; stroke-width: 2; }
.search input { flex: 1; margin-left: 12px; color: #222; font-size: 17px; }
.search input::placeholder { color: #5f5c5d; opacity: 1; }
.password { width: 58px; height: 28px; }
.zoom-word { fill: #fff; font: 700 8px "Open Sans", sans-serif; }
.vt-word { fill: #2a2ab0; font: 12px "Liberation Sans", sans-serif; }

.tray { display: flex; align-items: center; justify-content: flex-end; padding-right: 25px; }
.tray svg { fill: none; stroke: #fff; stroke-width: 1.5; }
.tray-up svg { width: 14px; height: 10px; }
.ime { margin: 0 20px 0 25px; }
.ime svg { width: 18px; height: 20px; }
.net { gap: 10px; }
.net svg { width: 20px; height: 16px; }
.clock { flex-direction: column; align-items: flex-end; margin: 0 9px 0 23px; font: 14px/20px "Open Sans", sans-serif; }
.badge {
  width: 20px;
  height: 20px;
  border-radius: 10px;
  background: #4cc2ff;
  color: #111;
  font: 12px/20px "Open Sans", sans-serif;
  text-align: center;
}
```
